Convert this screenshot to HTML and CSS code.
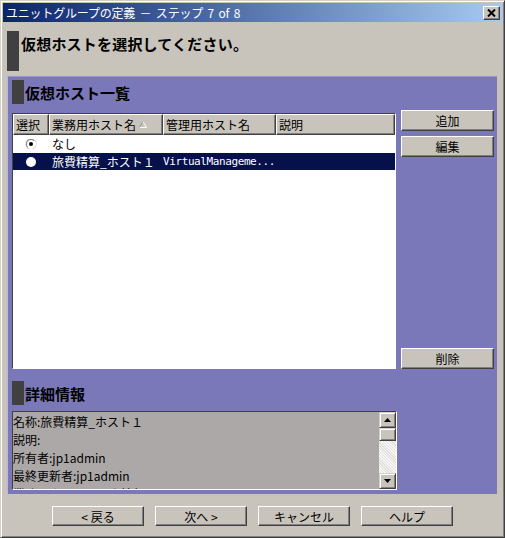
FILE: index.html
```html
<!DOCTYPE html>
<html>
<head>
<meta charset="utf-8">
<link rel="stylesheet" href="styles.css">
</head>
<body>
<div class="win">
  <div class="titlebar">
    <span class="ttl">ユニットグループの定義 － ステップ 7 of 8</span>
    <span class="close"><svg width="9" height="8" viewBox="0 0 9 8"><path d="M1 0.5 L8 7.5 M8 0.5 L1 7.5" stroke="#000" stroke-width="2"/></svg></span>
  </div>
  <div class="head">
    <div class="bar big"></div>
    <div class="htext">仮想ホストを選択してください。</div>
  </div>
  <div class="panel">
    <div class="sec"><div class="bar"></div><span class="stext">仮想ホスト一覧</span></div>
    <div class="listrow">
      <div class="table">
        <div class="thead">
          <div class="th c1">選択</div>
          <div class="th c2">業務用ホスト名<svg class="sort" width="8" height="7" viewBox="0 0 8 7"><path d="M4 0.5 L7.5 6.5 L0.5 6.5 Z" fill="none" stroke="#fff" stroke-width="1"/><path d="M4 0.5 L0.5 6.5" stroke="#808080" stroke-width="1"/></svg></div>
          <div class="th c3">管理用ホスト名</div>
          <div class="th c4">説明</div>
        </div>
        <div class="tr">
          <div class="td c1"><span class="radio on"></span></div>
          <div class="td c2">なし</div>
        </div>
        <div class="tr sel">
          <div class="td c1"><span class="radio white"></span></div>
          <div class="td c2">旅費精算_ホスト１</div>
          <div class="td c3 mono">VirtualManageme...</div>
        </div>
      </div>
      <div class="btncol">
        <button class="btn side">追加</button>
        <button class="btn side">編集</button>
        <button class="btn side del">削除</button>
      </div>
    </div>
    <div class="sec sec2"><div class="bar"></div><span class="stext">詳細情報</span></div>
    <div class="details">
      <div class="dtext">
        <div class="dl">名称:旅費精算_ホスト１</div>
        <div class="dl">説明:</div>
        <div class="dl">所有者:jp1admin</div>
        <div class="dl">最終更新者:jp1admin</div>
        <div class="dl">業務用ホストワーク情報</div>
      </div>
      <div class="vscroll">
        <div class="sbtn"><svg width="7" height="4" viewBox="0 0 7 4"><path d="M3.5 0 L7 4 L0 4 Z" fill="#000"/></svg></div>
        <div class="thumb"></div>
        <div class="track"></div>
        <div class="sbtn"><svg width="7" height="4" viewBox="0 0 7 4"><path d="M0 0 L7 0 L3.5 4 Z" fill="#000"/></svg></div>
      </div>
    </div>
  </div>
  <div class="footer">
    <button class="btn foot">&lt; 戻る</button>
    <button class="btn foot">次へ &gt;</button>
    <button class="btn foot">キャンセル</button>
    <button class="btn foot">ヘルプ</button>
  </div>
</div>
</body>
</html>
```

FILE: styles.css
```css
* { box-sizing: border-box; }
html, body { margin: 0; padding: 0; }
body {
  width: 505px;
  height: 538px;
  overflow: hidden;
  font-family: "Noto Sans CJK JP", "Liberation Sans", sans-serif;
  font-size: 12px;
  color: #000;
  background: #c8c4bc;
}
.win {
  width: 505px;
  height: 538px;
  background: #c8c4bc;
  border: 1px solid;
  border-color: #d4d0c8 #404040 #404040 #d4d0c8;
  box-shadow: inset 1px 1px #ffffff, inset -1px -1px #808080;
  padding: 2px;
  display: flex;
  flex-direction: column;
}
.titlebar {
  height: 19px;
  flex: none;
  background: linear-gradient(to right, #0a246a, #a6caf0);
  display: flex;
  align-items: center;
  padding-left: 3px;
  padding-right: 2px;
}
.ttl {
  color: #fff;
  font-size: 12px;
  line-height: 19px;
  flex: 1;
  letter-spacing: -0.2px;
  word-spacing: 2px;
}
.close {
  width: 17px;
  height: 14px;
  background: #c8c4bc;
  border: 1px solid;
  border-color: #fff #404040 #404040 #fff;
  box-shadow: inset -1px -1px #808080;
  display: flex;
  align-items: center;
  justify-content: center;
}
.head {
  height: 54px;
  flex: none;
  display: flex;
  align-items: flex-start;
  padding-left: 4px;
  padding-top: 9px;
}
.bar {
  width: 12px;
  height: 24px;
  background: #404040;
  flex: none;
}
.bar.big { height: 40px; }
.htext {
  font-weight: bold;
  font-size: 15px;
  line-height: 18px;
  margin-top: 4px;
  margin-left: 2px;
  letter-spacing: 0.2px;
}
.panel {
  height: 418px;
  flex: none;
  margin: 0 5px 0 4px;
  background: #7a78b8;
  border-left: 1px solid #b8b6dc;
  border-top: 1px solid #9896c8;
  padding: 3px 3px 0 4px;
  display: flex;
  flex-direction: column;
}
.sec {
  display: flex;
  align-items: center;
  height: 24px;
}
.stext {
  font-weight: bold;
  font-size: 15px;
  margin-left: 1px;
}
.sec2 { margin-top: 12px; }
.listrow {
  display: flex;
  margin-top: 6px;
  gap: 5px;
}
.table {
  width: 384px;
  height: 256px;
  margin-top: 3px;
  background: #fff;
  border: 1px solid;
  border-color: #404040 #ffffff #ffffff #404040;
}
.thead {
  display: flex;
  height: 21px;
}
.th {
  height: 21px;
  background: #c8c4bc;
  border: 1px solid;
  border-color: #fff #404040 #404040 #fff;
  box-shadow: inset -1px -1px #808080;
  line-height: 18px;
  padding-left: 2px;
  white-space: nowrap;
  display: flex;
  align-items: center;
}
.c1 { width: 36px; }
.c2 { width: 114px; }
.c3 { width: 113px; }
.c4 { width: 119px; }
.sort { margin-left: 3px; }
.tr {
  display: flex;
  height: 18px;
  align-items: center;
}
.td {
  white-space: nowrap;
  padding-left: 3px;
  line-height: 18px;
  overflow: hidden;
}
.td.c1 { display: flex; justify-content: center; padding-left: 0; }
.tr.sel { background: #06104a; color: #fff; height: 17px; }
.mono {
  font-family: "DejaVu Sans Mono", "Liberation Mono", monospace;
  font-size: 11px;
  letter-spacing: -0.4px;
  padding-left: 0;
}
.radio {
  width: 10px;
  height: 10px;
  border-radius: 50%;
  display: inline-block;
  position: relative;
}
.radio.on {
  border: 1px solid;
  border-color: #808080 #fff #fff #808080;
  background: #fff;
  box-shadow: 0 0 0 0.5px #c0c0c0;
}
.radio.on::after {
  content: "";
  position: absolute;
  left: 2px;
  top: 2px;
  width: 4px;
  height: 4px;
  border-radius: 50%;
  background: #000;
}
.radio.white { background: #fff; }
.btncol {
  display: flex;
  flex-direction: column;
  width: 93px;
  height: 259px;
  gap: 5px;
}
.btn {
  font-family: "Noto Sans CJK JP", "Liberation Sans", sans-serif;
  font-size: 12px;
  color: #000;
  background: #c8c4bc;
  border: 1px solid;
  border-color: #fff #404040 #404040 #fff;
  box-shadow: inset -1px -1px #808080;
  padding: 0;
  line-height: 17px;
}
.side { height: 21px; }
.del { margin-top: auto; }
.details {
  width: 385px;
  height: 79px;
  margin-top: 6px;
  background: #aca8a8;
  border: 1px solid;
  border-color: #404040 #ffffff #ffffff #404040;
  display: flex;
  overflow: hidden;
}
.dtext {
  flex: 1;
  overflow: hidden;
  padding-top: 1px;
}
.dl {
  height: 18px;
  line-height: 18px;
  white-space: nowrap;
}
.vscroll {
  width: 17px;
  display: flex;
  flex-direction: column;
  flex: none;
}
.sbtn, .thumb {
  height: 16px;
  background: #c8c4bc;
  border: 1px solid;
  border-color: #d4d0c8 #404040 #404040 #d4d0c8;
  box-shadow: inset 1px 1px #fff, inset -1px -1px #808080;
  display: flex;
  align-items: center;
  justify-content: center;
  flex: none;
}
.thumb { height: 13px; }
.track {
  flex: 1;
  background-color: #ecebe8;
  background-image: repeating-linear-gradient(45deg, #f6f6f4 0 1px, #e2e0dc 1px 2px);
}
.footer {
  flex: 1;
  display: flex;
  padding-top: 12px;
  padding-left: 49px;
  gap: 11px;
}
.foot {
  width: 92px;
  height: 20px;
}
```
